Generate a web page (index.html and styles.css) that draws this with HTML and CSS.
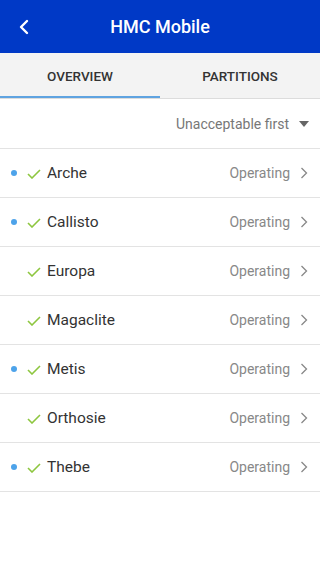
FILE: index.html
```html
<!DOCTYPE html>
<html>
<head>
<meta charset="utf-8">
<link rel="stylesheet" href="styles.css">
</head>
<body>
<header class="appbar">
  <svg class="back" width="12" height="16" viewBox="0 0 12 16"><path d="M9 2 L3 8 L9 14" fill="none" stroke="#fff" stroke-width="2.4" stroke-linecap="round" stroke-linejoin="round"/></svg>
  <h1 class="title">HMC Mobile</h1>
</header>
<nav class="tabs">
  <div class="tab active">OVERVIEW</div>
  <div class="tab">PARTITIONS</div>
</nav>
<div class="sort">
  <span>Unacceptable first</span>
  <svg width="10" height="6" viewBox="0 0 10 6"><path d="M0 0 H10 L5 6 Z" fill="#666"/></svg>
</div>
<ul class="list">
  <li class="row"><span class="dot"></span><svg class="check" width="14" height="10" viewBox="0 0 14 10"><path d="M1 5 L5 9 L13 1" fill="none" stroke="#8dc63f" stroke-width="1.6"/></svg><span class="name">Arche</span><span class="status">Operating</span><svg class="chev" width="8" height="12" viewBox="0 0 8 12"><path d="M1.5 1 L6.5 6 L1.5 11" fill="none" stroke="#888" stroke-width="1.3"/></svg></li>
  <li class="row"><span class="dot"></span><svg class="check" width="14" height="10" viewBox="0 0 14 10"><path d="M1 5 L5 9 L13 1" fill="none" stroke="#8dc63f" stroke-width="1.6"/></svg><span class="name">Callisto</span><span class="status">Operating</span><svg class="chev" width="8" height="12" viewBox="0 0 8 12"><path d="M1.5 1 L6.5 6 L1.5 11" fill="none" stroke="#888" stroke-width="1.3"/></svg></li>
  <li class="row"><span class="dot off"></span><svg class="check" width="14" height="10" viewBox="0 0 14 10"><path d="M1 5 L5 9 L13 1" fill="none" stroke="#8dc63f" stroke-width="1.6"/></svg><span class="name">Europa</span><span class="status">Operating</span><svg class="chev" width="8" height="12" viewBox="0 0 8 12"><path d="M1.5 1 L6.5 6 L1.5 11" fill="none" stroke="#888" stroke-width="1.3"/></svg></li>
  <li class="row"><span class="dot off"></span><svg class="check" width="14" height="10" viewBox="0 0 14 10"><path d="M1 5 L5 9 L13 1" fill="none" stroke="#8dc63f" stroke-width="1.6"/></svg><span class="name">Magaclite</span><span class="status">Operating</span><svg class="chev" width="8" height="12" viewBox="0 0 8 12"><path d="M1.5 1 L6.5 6 L1.5 11" fill="none" stroke="#888" stroke-width="1.3"/></svg></li>
  <li class="row"><span class="dot"></span><svg class="check" width="14" height="10" viewBox="0 0 14 10"><path d="M1 5 L5 9 L13 1" fill="none" stroke="#8dc63f" stroke-width="1.6"/></svg><span class="name">Metis</span><span class="status">Operating</span><svg class="chev" width="8" height="12" viewBox="0 0 8 12"><path d="M1.5 1 L6.5 6 L1.5 11" fill="none" stroke="#888" stroke-width="1.3"/></svg></li>
  <li class="row"><span class="dot off"></span><svg class="check" width="14" height="10" viewBox="0 0 14 10"><path d="M1 5 L5 9 L13 1" fill="none" stroke="#8dc63f" stroke-width="1.6"/></svg><span class="name">Orthosie</span><span class="status">Operating</span><svg class="chev" width="8" height="12" viewBox="0 0 8 12"><path d="M1.5 1 L6.5 6 L1.5 11" fill="none" stroke="#888" stroke-width="1.3"/></svg></li>
  <li class="row"><span class="dot"></span><svg class="check" width="14" height="10" viewBox="0 0 14 10"><path d="M1 5 L5 9 L13 1" fill="none" stroke="#8dc63f" stroke-width="1.6"/></svg><span class="name">Thebe</span><span class="status">Operating</span><svg class="chev" width="8" height="12" viewBox="0 0 8 12"><path d="M1.5 1 L6.5 6 L1.5 11" fill="none" stroke="#888" stroke-width="1.3"/></svg></li>
</ul>
</body>
</html>
```
FILE: styles.css
```css
* { box-sizing: border-box; }
html, body { margin: 0; padding: 0; background: #fff; font-family: Roboto, "Noto Sans", sans-serif; }
.appbar {
  height: 53px;
  background: #0039c6;
  display: flex;
  align-items: center;
  justify-content: center;
  position: relative;
}
.back { position: absolute; left: 18px; top: 19px; }
.title { margin: 0; color: #fff; font-size: 18px; font-weight: 500; }
.tabs {
  display: flex;
  height: 46px;
  background: #f3f3f3;
  border-bottom: 1px solid #dcdcdc;
}
.tab {
  flex: 1;
  display: flex;
  align-items: center;
  justify-content: center;
  font-size: 13.5px;
  font-weight: 500;
  color: #333;
  border-bottom: 2px solid transparent;
  padding-top: 2px;
}
.tab.active { border-bottom-color: #5fa3e0; }
.sort {
  height: 50px;
  display: flex;
  align-items: center;
  justify-content: flex-end;
  gap: 10px;
  padding-right: 11px;
  border-bottom: 1px solid #e3e3e3;
  font-size: 14px;
  color: #777;
}
.sort svg { margin-top: 1px; }
.list { list-style: none; margin: 0; padding: 0; }
.row {
  height: 49px;
  display: flex;
  align-items: center;
  padding: 0 12px 0 11px;
  border-bottom: 1px solid #e3e3e3;
}
.dot {
  width: 6px; height: 6px; border-radius: 50%;
  background: #4da3ea;
  margin-right: 10px;
}
.dot.off { background: transparent; }
.check { margin-right: 6px; margin-top: 1px; }
.name { flex: 1; font-size: 15.5px; color: #333; }
.status { font-size: 14px; color: #888; margin-right: 10px; }
```
